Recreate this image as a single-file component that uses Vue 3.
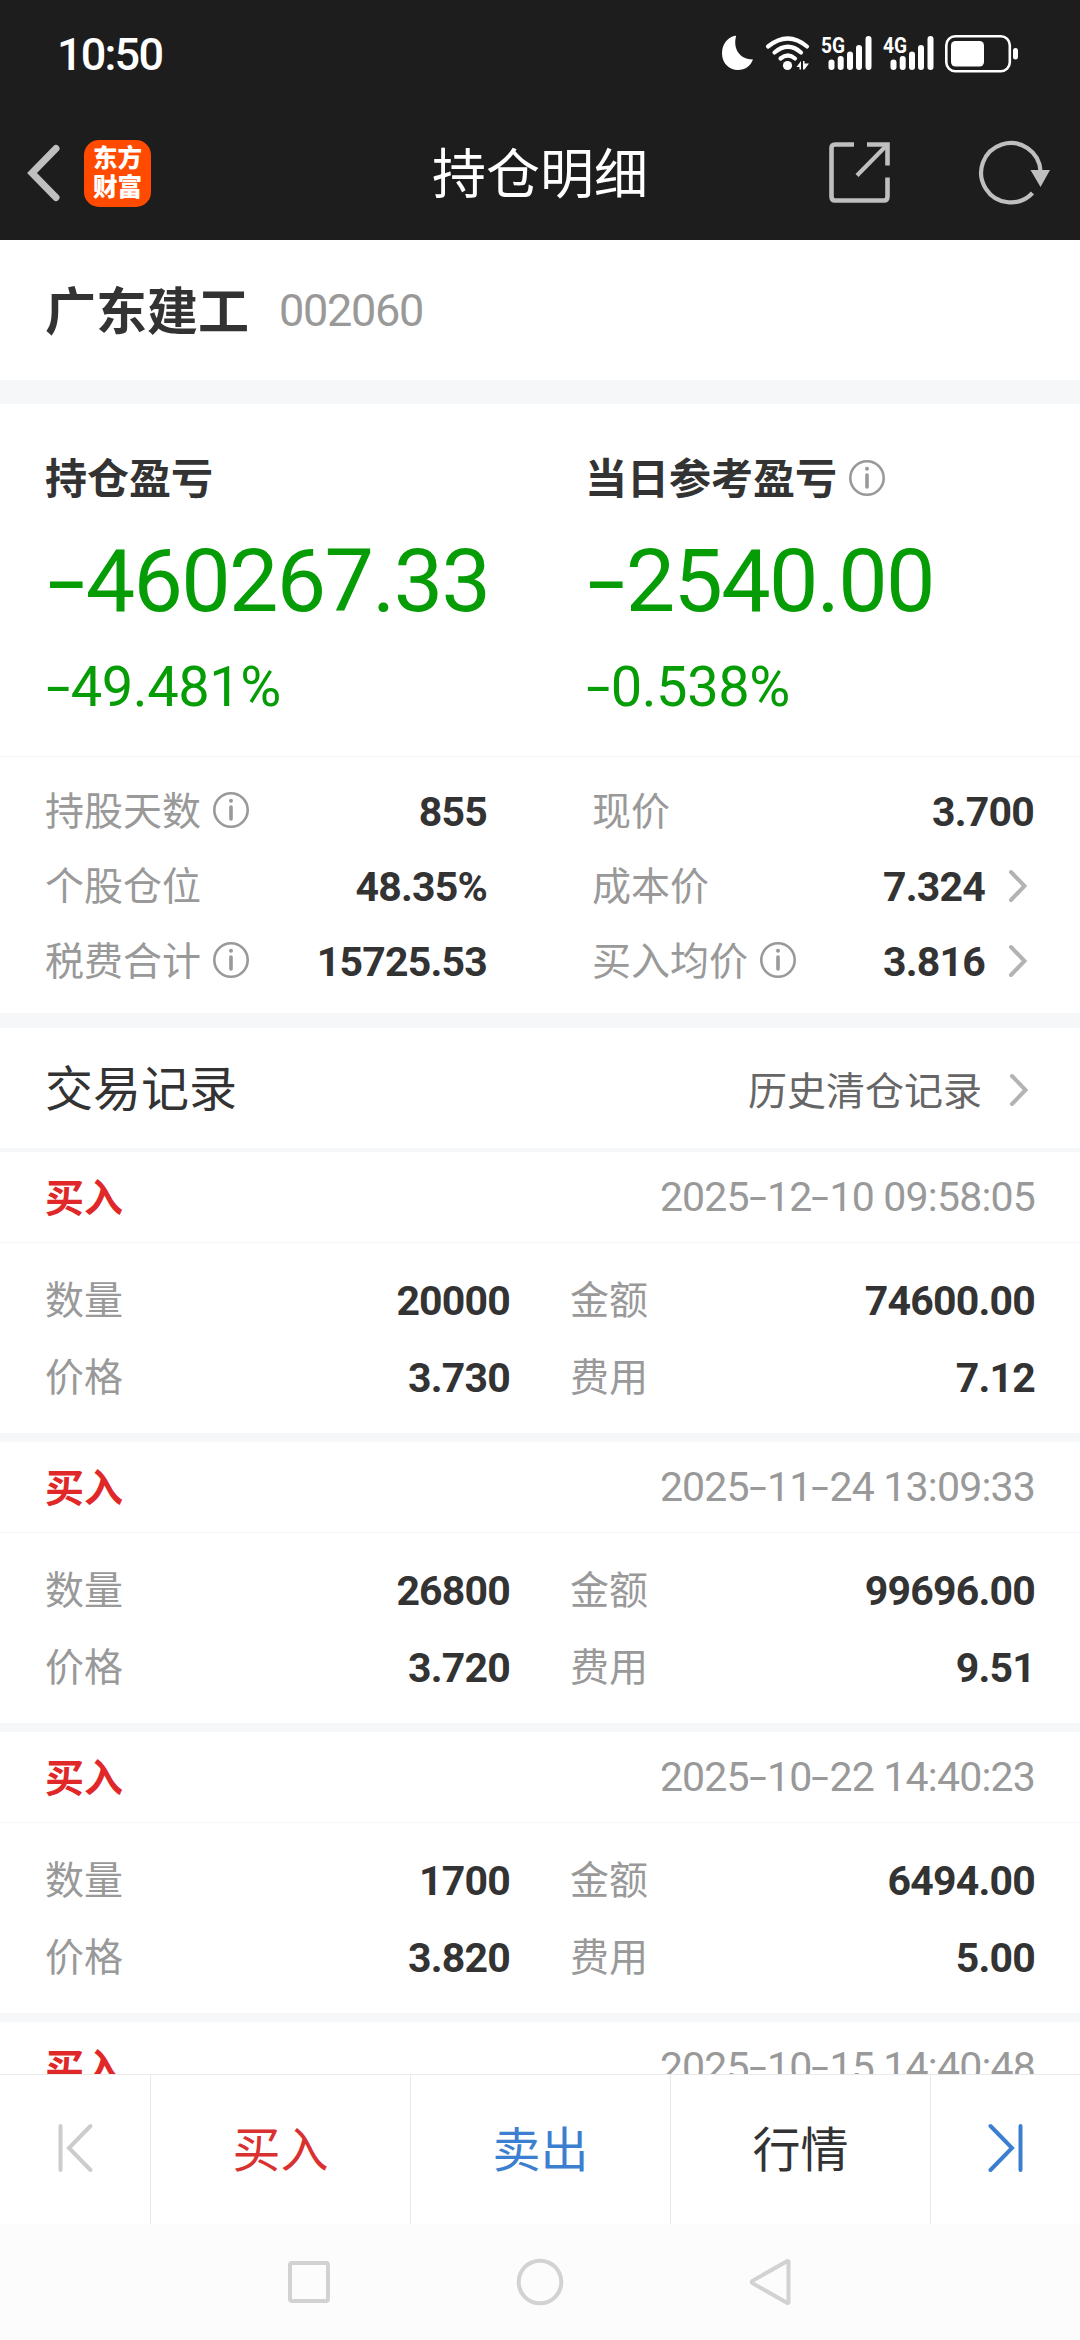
<template>
  <div class="page">
    <header class="top">
      <div class="status">
        <span class="clock">10:50</span>
        <div class="status-icons">
          <svg class="moon" width="34" height="36" viewBox="0 0 34 36">
            <path d="M15 1.5C12 13 18 24.500 32 24.500C29.500 31 24 35 17 35C8 35 1 28 1 18.500C1 9 7 2 14 0.800Q15.500 0.500 15 1.500Z" fill="#fff" />
          </svg>
          <svg class="wifi" width="46" height="36" viewBox="0 0 46 36">
            <g fill="none" stroke="#fff" stroke-width="4.200" stroke-linecap="round">
              <path d="M3 11.500Q23 -4.500 42 11.500" />
              <path d="M9.500 17.500Q23 6 36 17.500" />
              <path d="M15.500 23.500Q23 17.500 30 23.500" />
            </g>
            <circle cx="22.500" cy="30.500" r="4.600" fill="#fff" />
            <path d="M31.500 32L36 26V34.500H34.500V32ZM38 26H39.500V28.500H44L39.500 34.500H38Z" fill="#fff" />
          </svg>
          <svg v-for="net in ['5G', '4G']" :key="net" class="signal" width="52" height="36" viewBox="0 0 52 36">
            <text x="0" y="17.500" textLength="24" lengthAdjust="spacingAndGlyphs" font-size="22.500" font-weight="700" fill="#fff">{{ net }}</text>
            <g fill="#fff">
              <rect x="7.500" y="24.500" width="6" height="10.500" rx="3" />
              <rect x="16.700" y="21" width="6" height="14" rx="3" />
              <rect x="26" y="16.500" width="6" height="18.500" rx="3" />
              <rect x="35" y="10" width="6" height="25" rx="3" />
              <rect x="44.500" y="1" width="6" height="34" rx="3" />
            </g>
          </svg>
          <svg class="battery" width="74" height="38" viewBox="0 0 74 38">
            <rect x="1.300" y="1.300" width="63.500" height="35" rx="9" fill="none" stroke="#fff" stroke-width="2.600" />
            <rect x="6" y="6" width="33" height="25.500" rx="4.500" fill="#fff" />
            <rect x="68" y="13" width="5" height="11.500" rx="2.500" fill="#fff" />
          </svg>
        </div>
      </div>
      <div class="navbar">
        <div class="nav-left">
          <svg width="34" height="58" viewBox="0 0 34 58">
            <path d="M29 4.500L5 29L29 53.500" fill="none" stroke="#bfbfbf" stroke-width="7" stroke-linecap="round" />
          </svg>
          <div class="logo"><span>东方</span><span>财富</span></div>
        </div>
        <h1>持仓明细</h1>
        <div class="nav-right">
          <svg width="62" height="62" viewBox="0 0 62 62">
            <g fill="none" stroke="#bfbfbf" stroke-width="4.600">
              <path d="M25 2.500H6Q2.500 2.500 2.500 6V54.500Q2.500 58.500 6 58.500H55Q58.500 58.500 58.500 54.500V35.500" />
              <path d="M38 2.500H58.500V23.500" />
              <path d="M58 3L28 33.500" stroke-width="4.200" />
            </g>
          </svg>
          <svg width="72" height="64" viewBox="0 0 72 64">
            <path d="M61.500 30A29.700 29.700 0 1 0 53.500 52" fill="none" stroke="#bfbfbf" stroke-width="4.200" />
            <path d="M51.500 29H71L61.500 46Z" fill="#bfbfbf" />
          </svg>
        </div>
      </div>
    </header>

    <section class="stock">
      <span class="stock-name">广东建工</span>
      <span class="stock-code">002060</span>
    </section>

    <section class="summary">
      <div v-for="item in profits" :key="item.title" class="profit">
        <div class="profit-title">
          {{ item.title }}
          <svg v-if="item.info" class="info" viewBox="0 0 36 36">
            <circle cx="18" cy="18" r="16.700" />
            <circle class="dot" cx="18" cy="8.800" r="2" />
            <path d="M18 15V27" />
          </svg>
        </div>
        <div class="profit-value"><i class="dash">-</i>{{ item.value }}</div>
        <div class="profit-rate"><i class="dash">-</i>{{ item.rate }}</div>
      </div>
    </section>

    <section class="details">
      <div v-for="(col, c) in details" :key="c" class="detail-col">
        <div v-for="row in col" :key="row.label" class="detail-row">
          <span class="label">{{ row.label }}</span>
          <svg v-if="row.info" class="info" viewBox="0 0 36 36">
            <circle cx="18" cy="18" r="16.700" />
            <circle class="dot" cx="18" cy="8.800" r="2" />
            <path d="M18 15V27" />
          </svg>
          <span class="value">{{ row.value }}</span>
          <svg v-if="row.link" class="arrow" viewBox="0 0 20 34">
            <path d="M3 3L16.500 17L3 31" />
          </svg>
        </div>
      </div>
    </section>

    <section class="list">
      <div class="list-head">
        <h2>交易记录</h2>
        <div class="history">
          历史清仓记录
          <svg class="arrow" viewBox="0 0 20 34">
            <path d="M3 3L16.500 17L3 31" />
          </svg>
        </div>
      </div>

      <div v-for="record in records" :key="record.time" class="record">
        <div class="record-head">
          <span class="side">买入</span>
          <span class="time"><template v-for="(part, i) in record.time.split('-')" :key="i"><i v-if="i" class="dash">-</i>{{ part }}</template></span>
        </div>
        <div v-if="record.count" class="record-body">
          <span class="label">数量</span>
          <span class="value">{{ record.count }}</span>
          <span class="label second">金额</span>
          <span class="value">{{ record.amount }}</span>
          <span class="label">价格</span>
          <span class="value">{{ record.price }}</span>
          <span class="label second">费用</span>
          <span class="value">{{ record.fee }}</span>
        </div>
      </div>
    </section>

    <footer class="actions">
      <div class="action prev">
        <svg width="38" height="50" viewBox="0 0 38 50">
          <path d="M4.500 3V47M34.500 3L13 25L34.500 47" />
        </svg>
      </div>
      <div class="action buy">买入</div>
      <div class="action sell">卖出</div>
      <div class="action">行情</div>
      <div class="action next">
        <svg width="38" height="50" viewBox="0 0 38 50">
          <path d="M33.500 3V47M3.500 3L25 25L3.500 47" />
        </svg>
      </div>
    </footer>

    <div class="system-nav">
      <svg width="48" height="48" viewBox="0 0 48 48"><rect x="5" y="5" width="38" height="38" rx="2" /></svg>
      <svg width="48" height="48" viewBox="0 0 48 48"><circle cx="24" cy="24" r="21.300" /></svg>
      <svg width="48" height="48" viewBox="0 0 48 48"><path d="M41.500 3.500V44.500Q41 45.500 39.500 44.500L5.500 25.200Q4 24 5.500 22.800L39.500 3.500Q41 2.500 41.500 3.500Z" /></svg>
    </div>
  </div>
</template>

<script setup>
const profits = [
  { title: '持仓盈亏', value: '460267.33', rate: '49.481%' },
  { title: '当日参考盈亏', value: '2540.00', rate: '0.538%', info: true }
]

const details = [
  [
    { label: '持股天数', value: '855', info: true },
    { label: '个股仓位', value: '48.35%' },
    { label: '税费合计', value: '15725.53', info: true }
  ],
  [
    { label: '现价', value: '3.700' },
    { label: '成本价', value: '7.324', link: true },
    { label: '买入均价', value: '3.816', info: true, link: true }
  ]
]

const records = [
  { time: '2025-12-10 09:58:05', count: '20000', amount: '74600.00', price: '3.730', fee: '7.12' },
  { time: '2025-11-24 13:09:33', count: '26800', amount: '99696.00', price: '3.720', fee: '9.51' },
  { time: '2025-10-22 14:40:23', count: '1700', amount: '6494.00', price: '3.820', fee: '5.00' },
  { time: '2025-10-15 14:40:48' }
]
</script>

<style>
body {
  margin: 0;
}
</style>

<style scoped>
.page {
  display: flex;
  flex-direction: column;
  width: 1080px;
  height: 2340px;
  overflow: hidden;
  background: #f6f7f9;
  color: #333;
  font-family: Roboto, "Noto Sans CJK SC", sans-serif;
  line-height: 1.2;
}

.page svg {
  display: block;
  flex: none;
  overflow: visible;
}

.top {
  height: 240px;
  flex: none;
  background: #1d1d1d;
  color: #fff;
}

.status {
  display: flex;
  justify-content: space-between;
  height: 108px;
  padding: 0 61px 0 57px;
}

.clock {
  line-height: 110px;
  font-size: 45px;
  font-weight: 500;
  letter-spacing: -1.8px;
}

.status-icons {
  display: flex;
  align-items: flex-start;
  padding-top: 35px;
}

.wifi {
  margin: 0 10px;
}

.signal {
  margin-right: 10px;
}

.navbar {
  display: grid;
  grid-template-columns: 1fr auto 1fr;
  align-items: center;
  height: 130px;
}

.nav-left {
  display: flex;
  align-items: center;
  gap: 23px;
  padding-left: 27px;
}

.logo {
  display: flex;
  flex-direction: column;
  align-items: center;
  justify-content: center;
  width: 67px;
  height: 67px;
  border-radius: 15px;
  background: #ff4a00;
  font-size: 24.5px;
  font-weight: 900;
  line-height: 29px;
}

h1,
h2 {
  margin: 0;
  font-weight: 400;
}

h1 {
  padding-top: 5px;
  font-size: 54px;
  line-height: 80px;
}

.nav-right {
  display: flex;
  align-items: center;
  justify-content: flex-end;
  gap: 88px;
  padding-right: 29px;
}

.stock {
  display: flex;
  align-items: center;
  gap: 30px;
  height: 140px;
  flex: none;
  padding: 0 45px;
  background: #fff;
}

.stock-name {
  padding-top: 5px;
  font-size: 51px;
  font-weight: 700;
}

.stock-code {
  padding-top: 2px;
  color: #999;
  font-size: 45px;
  letter-spacing: -1.3px;
}

.summary {
  display: grid;
  grid-template-columns: 1fr 1fr;
  height: 352px;
  flex: none;
  margin-top: 24px;
  border-bottom: 1px solid #f3f3f4;
  background: #fff;
}

.profit {
  padding: 43px 0 0 45px;
}

.profit-title {
  display: flex;
  align-items: center;
  gap: 12px;
  height: 66px;
  font-size: 42px;
  font-weight: 700;
}

.profit-title .info {
  margin-bottom: 4px;
}

.profit-value,
.profit-rate {
  color: #059c05;
  white-space: nowrap;
}

.profit-value {
  height: 136px;
  padding-left: 2px;
  line-height: 136px;
  font-size: 88px;
  letter-spacing: -1.7px;
}

.profit-rate {
  height: 76px;
  padding-left: 1px;
  line-height: 76px;
  font-size: 56px;
  letter-spacing: -0.4px;
}

.dash {
  display: inline-block;
  width: 0.44em;
  font-style: normal;
  letter-spacing: 0;
  text-align: center;
  transform: scaleX(1.55);
}

.info {
  width: 36px;
  height: 36px;
  fill: none;
  stroke: #999;
  stroke-width: 2.6;
  stroke-linecap: round;
}

.info path {
  stroke-width: 3.6;
}

.info .dot {
  fill: #999;
  stroke: none;
}

.details {
  display: flex;
  height: 256px;
  flex: none;
  background: #fff;
}

.detail-col {
  width: 442px;
  padding: 18px 0 0 45px;
}

.detail-col + .detail-col {
  padding-left: 105px;
}

.detail-row {
  display: flex;
  align-items: center;
  height: 75px;
}

.detail-row .info {
  margin: 0 0 5px 12px;
}

.label {
  color: #999;
  font-size: 39px;
  white-space: nowrap;
}

.value {
  margin-left: auto;
  font-size: 41px;
  font-weight: 700;
  letter-spacing: -0.8px;
}

.arrow {
  width: 20px;
  height: 34px;
  margin: 0 6px 4px 23px;
  fill: none;
  stroke: #b3b3b3;
  stroke-width: 4;
  stroke-linecap: round;
}

.list {
  flex: 1;
  min-height: 0;
  margin-top: 15px;
  overflow: hidden;
}

.list-head {
  display: flex;
  align-items: center;
  justify-content: space-between;
  height: 120px;
  margin-bottom: 4px;
  padding: 0 45px;
  background: #fff;
}

h2 {
  padding-top: 3px;
  font-size: 48px;
}

.history {
  display: flex;
  align-items: center;
  padding-top: 9px;
  color: #666;
  font-size: 39px;
}

.history .arrow {
  margin-left: 27px;
}

.record {
  height: 281px;
  margin-bottom: 9px;
  background: #fff;
}

.record-head {
  display: flex;
  align-items: center;
  justify-content: space-between;
  box-sizing: border-box;
  height: 91px;
  padding: 2px 45px 0;
  border-bottom: 1px solid #f6f6f8;
}

.side {
  padding-top: 3px;
  color: #e02828;
  font-size: 39px;
  font-weight: 700;
}

.time {
  color: #999;
  font-size: 41px;
  letter-spacing: -0.8px;
}

.record-body {
  display: grid;
  grid-template-columns: 78px 387px 138px 387px;
  grid-auto-rows: 77px;
  align-items: center;
  padding: 20px 45px 0;
}

.second {
  padding-left: 60px;
}

.actions {
  display: grid;
  grid-template-columns: 150px repeat(3, 260px) 150px;
  height: 149px;
  flex: none;
  border-top: 1px solid #e9e9e9;
  background: #fff;
}

.action {
  display: flex;
  align-items: center;
  justify-content: center;
  padding-top: 2px;
  color: #333;
  font-size: 48px;
}

.action + .action {
  border-left: 1px solid #e9e9e9;
}

.action svg {
  margin-bottom: 6px;
  fill: none;
  stroke: #ccc;
  stroke-width: 4;
  stroke-linecap: round;
}

.action.next svg {
  stroke: #3c7fd0;
}

.buy {
  color: #d93030;
}

.sell {
  color: #3c7fd0;
}

.system-nav {
  display: flex;
  justify-content: center;
  gap: 183px;
  height: 82px;
  flex: none;
  padding-top: 34px;
  background: #fcfcfc;
}

.system-nav svg {
  fill: none;
  stroke: #d2d2d2;
  stroke-width: 4;
}
</style>
